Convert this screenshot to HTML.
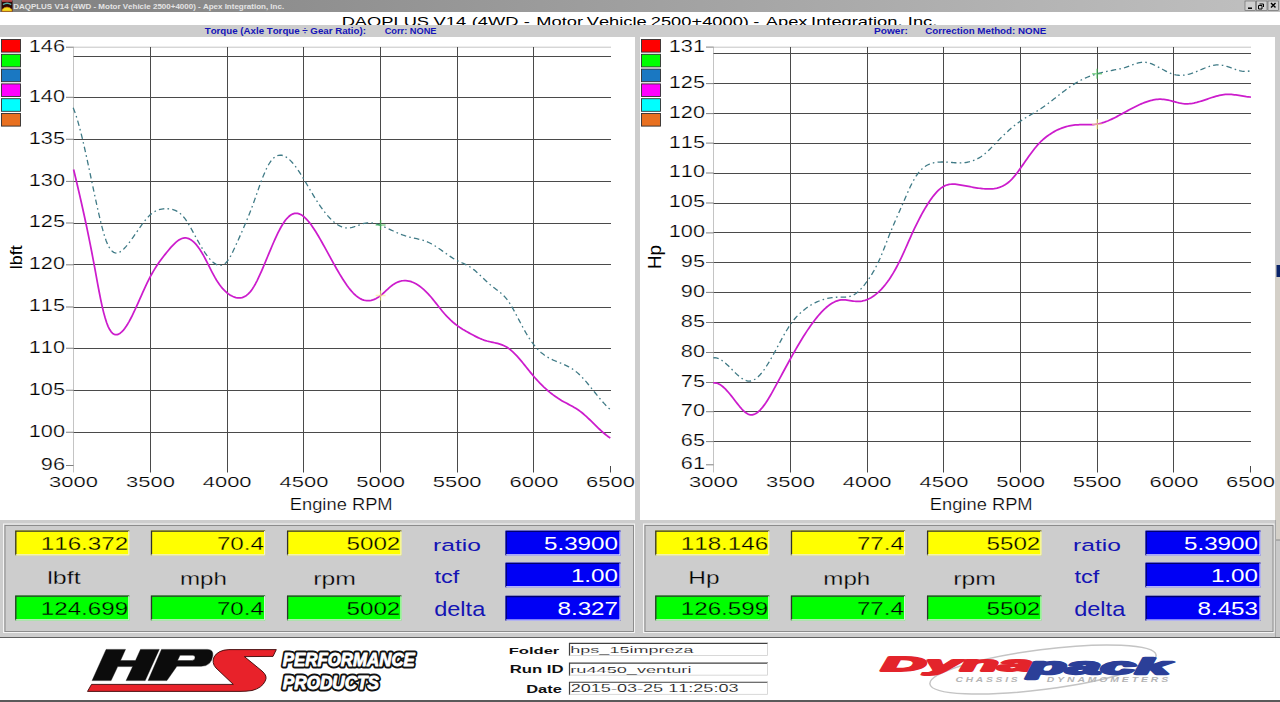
<!DOCTYPE html>
<html><head><meta charset="utf-8"><style>html,body{margin:0;padding:0;width:1280px;height:702px;overflow:hidden;background:#fff}</style></head><body>
<svg width="1280" height="702" viewBox="0 0 1280 702" style="position:absolute;left:0;top:0;font-kerning:none">
<rect x="0" y="0" width="1280" height="702" fill="#ffffff" />
<defs><linearGradient id="tbg" x1="0" y1="0" x2="1" y2="0"><stop offset="0" stop-color="#808080"/><stop offset="1" stop-color="#c0c0c0"/></linearGradient></defs>
<rect x="0" y="0" width="1280" height="12" fill="url(#tbg)" />
<g>
<rect x="1.5" y="0.5" width="11" height="11" fill="#2a0606" />
<rect x="2" y="0.3" width="10" height="1.4" fill="#d85050" />
<path d="M3,4.6 Q7.2,1.8 11.2,4.6" fill="none" stroke="#58a8a0" stroke-width="1.5"/>
<path d="M2,11.3 L2,9.5 Q7,4.6 12,9.5 L12,11.3 Z" fill="#f4dc20" stroke="#c86a10" stroke-width="0.7"/>
</g>
<text transform="matrix(0.07992,0,0,0.06915,13.141,8.548)" font-family="Liberation Sans" font-size="100" font-weight="bold" font-style="normal" fill="#e4e4e4" xml:space="preserve" >DAQPLUS V14 (4WD - Motor Vehicle 2500+4000) - Apex Integration, Inc.</text>
<rect x="1245" y="1" width="10.5" height="9.5" fill="#d0d0d0" stroke="#606060" stroke-width="0.6"/>
<rect x="1256.5" y="1" width="10.5" height="9.5" fill="#d0d0d0" stroke="#606060" stroke-width="0.6"/>
<rect x="1268" y="1" width="10.5" height="9.5" fill="#d0d0d0" stroke="#606060" stroke-width="0.6"/>
<path d="M1248,8.2 h4" stroke="#000" stroke-width="1.5"/>
<path d="M1259.5,4 h4 v3 M1258.5,5.5 h3.5 v3.5 h-3.5 z" fill="none" stroke="#000" stroke-width="1"/>
<path d="M1271,3 l4.5,4.5 M1275.5,3 l-4.5,4.5" stroke="#000" stroke-width="1.4"/>
<defs><clipPath id="ttl"><rect x="0" y="12" width="1280" height="13"/></clipPath></defs>
<g clip-path="url(#ttl)">
<text transform="matrix(0.18300,0,0,0.13600,341.636,25.500)" font-family="Liberation Sans" font-size="100" font-weight="normal" font-style="normal" fill="#000" text-anchor="start" xml:space="preserve" >DAQPLUS</text>
<text transform="matrix(0.18300,0,0,0.13600,433.567,25.500)" font-family="Liberation Sans" font-size="100" font-weight="normal" font-style="normal" fill="#000" text-anchor="start" xml:space="preserve" >V14</text>
<text transform="matrix(0.18300,0,0,0.13600,471.702,25.500)" font-family="Liberation Sans" font-size="100" font-weight="normal" font-style="normal" fill="#000" text-anchor="start" xml:space="preserve" >(4WD</text>
<text transform="matrix(0.18300,0,0,0.13600,523.668,25.500)" font-family="Liberation Sans" font-size="100" font-weight="normal" font-style="normal" fill="#000" text-anchor="start" xml:space="preserve" >-</text>
<text transform="matrix(0.18300,0,0,0.13600,536.236,25.500)" font-family="Liberation Sans" font-size="100" font-weight="normal" font-style="normal" fill="#000" text-anchor="start" xml:space="preserve" >Motor</text>
<text transform="matrix(0.18300,0,0,0.13600,586.717,25.500)" font-family="Liberation Sans" font-size="100" font-weight="normal" font-style="normal" fill="#000" text-anchor="start" xml:space="preserve" >Vehicle</text>
<text transform="matrix(0.18300,0,0,0.13600,650.785,25.500)" font-family="Liberation Sans" font-size="100" font-weight="normal" font-style="normal" fill="#000" text-anchor="start" xml:space="preserve" >2500+4000)</text>
<text transform="matrix(0.18300,0,0,0.13600,753.268,25.500)" font-family="Liberation Sans" font-size="100" font-weight="normal" font-style="normal" fill="#000" text-anchor="start" xml:space="preserve" >-</text>
<text transform="matrix(0.18300,0,0,0.13600,765.800,25.500)" font-family="Liberation Sans" font-size="100" font-weight="normal" font-style="normal" fill="#000" text-anchor="start" xml:space="preserve" >Apex</text>
<text transform="matrix(0.18300,0,0,0.13600,811.053,25.500)" font-family="Liberation Sans" font-size="100" font-weight="normal" font-style="normal" fill="#000" text-anchor="start" xml:space="preserve" >Integration,</text>
<text transform="matrix(0.18300,0,0,0.13600,907.853,25.500)" font-family="Liberation Sans" font-size="100" font-weight="normal" font-style="normal" fill="#000" text-anchor="start" xml:space="preserve" >Inc.</text>
</g>
<rect x="0" y="25" width="1280" height="12" fill="#cdcdcd" />
<text transform="matrix(0.09721,0,0,0.08511,204.703,34.213)" font-family="Liberation Sans" font-size="100" font-weight="bold" font-style="normal" fill="#1414b8" xml:space="preserve" >Torque (Axle Torque ÷ Gear Ratio):</text>
<text transform="matrix(0.09268,0,0,0.08803,384.629,34.162)" font-family="Liberation Sans" font-size="100" font-weight="bold" font-style="normal" fill="#1414b8" xml:space="preserve" >Corr: NONE</text>
<text transform="matrix(0.10126,0,0,0.08929,874.091,34.161)" font-family="Liberation Sans" font-size="100" font-weight="bold" font-style="normal" fill="#1414b8" xml:space="preserve" >Power:</text>
<text transform="matrix(0.09781,0,0,0.08446,925.209,34.166)" font-family="Liberation Sans" font-size="100" font-weight="bold" font-style="normal" fill="#1414b8" xml:space="preserve" >Correction Method: NONE</text>
<rect x="635" y="37" width="5" height="483" fill="#cdcdcd" />
<rect x="1275" y="37" width="5" height="228" fill="#cdcdcd" />
<rect x="1275" y="265" width="5" height="275" fill="#d4d0c8" />
<rect x="1276.5" y="265" width="3.5" height="12" fill="#0a246a" />
<rect x="1.5" y="39.5" width="19" height="12.6" fill="#ff0000" stroke="#303030" stroke-width="0.9"/>
<rect x="1.5" y="54.3" width="19" height="12.6" fill="#00ff00" stroke="#303030" stroke-width="0.9"/>
<rect x="1.5" y="69.1" width="19" height="12.6" fill="#1a78c2" stroke="#303030" stroke-width="0.9"/>
<rect x="1.5" y="83.9" width="19" height="12.6" fill="#ff00ff" stroke="#303030" stroke-width="0.9"/>
<rect x="1.5" y="98.7" width="19" height="12.6" fill="#00ffff" stroke="#303030" stroke-width="0.9"/>
<rect x="1.5" y="113.5" width="19" height="12.6" fill="#e87020" stroke="#303030" stroke-width="0.9"/>
<line x1="73" y1="47.2" x2="611" y2="47.2" stroke="#c4c4c4" stroke-width="1" />
<line x1="73.5" y1="47" x2="73.5" y2="472.5" stroke="#c4c4c4" stroke-width="1" />
<line x1="73.5" y1="56.5" x2="611" y2="56.5" stroke="#4a4a4a" stroke-width="1.0" />
<line x1="73.5" y1="97.5" x2="611" y2="97.5" stroke="#4a4a4a" stroke-width="1.0" />
<line x1="73.5" y1="139.5" x2="611" y2="139.5" stroke="#4a4a4a" stroke-width="1.0" />
<line x1="73.5" y1="181.5" x2="611" y2="181.5" stroke="#4a4a4a" stroke-width="1.0" />
<line x1="73.5" y1="223.5" x2="611" y2="223.5" stroke="#4a4a4a" stroke-width="1.0" />
<line x1="73.5" y1="264.5" x2="611" y2="264.5" stroke="#4a4a4a" stroke-width="1.0" />
<line x1="73.5" y1="307.5" x2="611" y2="307.5" stroke="#4a4a4a" stroke-width="1.0" />
<line x1="73.5" y1="348.5" x2="611" y2="348.5" stroke="#4a4a4a" stroke-width="1.0" />
<line x1="73.5" y1="390.5" x2="611" y2="390.5" stroke="#4a4a4a" stroke-width="1.0" />
<line x1="73.5" y1="432.5" x2="611" y2="432.5" stroke="#4a4a4a" stroke-width="1.0" />
<line x1="150.5" y1="47" x2="150.5" y2="472.5" stroke="#4a4a4a" stroke-width="1.0" />
<line x1="227.5" y1="47" x2="227.5" y2="472.5" stroke="#4a4a4a" stroke-width="1.0" />
<line x1="303.5" y1="47" x2="303.5" y2="472.5" stroke="#4a4a4a" stroke-width="1.0" />
<line x1="380.5" y1="47" x2="380.5" y2="472.5" stroke="#4a4a4a" stroke-width="1.0" />
<line x1="457.5" y1="47" x2="457.5" y2="472.5" stroke="#4a4a4a" stroke-width="1.0" />
<line x1="533.5" y1="47" x2="533.5" y2="472.5" stroke="#4a4a4a" stroke-width="1.0" />
<line x1="610.5" y1="466" x2="610.5" y2="472.5" stroke="#4a4a4a" stroke-width="1.0" />
<line x1="66" y1="47.2" x2="73.5" y2="47.2" stroke="#808080" stroke-width="1" />
<line x1="66" y1="97.3" x2="73.5" y2="97.3" stroke="#808080" stroke-width="1" />
<line x1="66" y1="139.25" x2="73.5" y2="139.25" stroke="#808080" stroke-width="1" />
<line x1="66" y1="181.4" x2="73.5" y2="181.4" stroke="#808080" stroke-width="1" />
<line x1="66" y1="223.0" x2="73.5" y2="223.0" stroke="#808080" stroke-width="1" />
<line x1="66" y1="264.8" x2="73.5" y2="264.8" stroke="#808080" stroke-width="1" />
<line x1="66" y1="307.0" x2="73.5" y2="307.0" stroke="#808080" stroke-width="1" />
<line x1="66" y1="348.25" x2="73.5" y2="348.25" stroke="#808080" stroke-width="1" />
<line x1="66" y1="390.25" x2="73.5" y2="390.25" stroke="#808080" stroke-width="1" />
<line x1="66" y1="432.25" x2="73.5" y2="432.25" stroke="#808080" stroke-width="1" />
<line x1="66" y1="465.5" x2="73.5" y2="465.5" stroke="#808080" stroke-width="1" />
<text transform="matrix(0.21742,0,0,0.15634,65.039,51.600)" font-family="Liberation Sans" font-size="100" font-weight="normal" font-style="normal" fill="#000" text-anchor="end" xml:space="preserve"  stroke="#ffffff" stroke-width="1.5">146</text>
<text transform="matrix(0.21742,0,0,0.15634,65.039,101.700)" font-family="Liberation Sans" font-size="100" font-weight="normal" font-style="normal" fill="#000" text-anchor="end" xml:space="preserve"  stroke="#ffffff" stroke-width="1.5">140</text>
<text transform="matrix(0.21742,0,0,0.15634,65.039,143.650)" font-family="Liberation Sans" font-size="100" font-weight="normal" font-style="normal" fill="#000" text-anchor="end" xml:space="preserve"  stroke="#ffffff" stroke-width="1.5">135</text>
<text transform="matrix(0.21742,0,0,0.15634,65.039,185.800)" font-family="Liberation Sans" font-size="100" font-weight="normal" font-style="normal" fill="#000" text-anchor="end" xml:space="preserve"  stroke="#ffffff" stroke-width="1.5">130</text>
<text transform="matrix(0.21742,0,0,0.15634,65.039,227.400)" font-family="Liberation Sans" font-size="100" font-weight="normal" font-style="normal" fill="#000" text-anchor="end" xml:space="preserve"  stroke="#ffffff" stroke-width="1.5">125</text>
<text transform="matrix(0.21742,0,0,0.15634,65.039,269.200)" font-family="Liberation Sans" font-size="100" font-weight="normal" font-style="normal" fill="#000" text-anchor="end" xml:space="preserve"  stroke="#ffffff" stroke-width="1.5">120</text>
<text transform="matrix(0.21742,0,0,0.15634,65.039,311.400)" font-family="Liberation Sans" font-size="100" font-weight="normal" font-style="normal" fill="#000" text-anchor="end" xml:space="preserve"  stroke="#ffffff" stroke-width="1.5">115</text>
<text transform="matrix(0.21742,0,0,0.15634,65.039,352.650)" font-family="Liberation Sans" font-size="100" font-weight="normal" font-style="normal" fill="#000" text-anchor="end" xml:space="preserve"  stroke="#ffffff" stroke-width="1.5">110</text>
<text transform="matrix(0.21742,0,0,0.15634,65.039,394.650)" font-family="Liberation Sans" font-size="100" font-weight="normal" font-style="normal" fill="#000" text-anchor="end" xml:space="preserve"  stroke="#ffffff" stroke-width="1.5">105</text>
<text transform="matrix(0.21742,0,0,0.15634,65.039,436.650)" font-family="Liberation Sans" font-size="100" font-weight="normal" font-style="normal" fill="#000" text-anchor="end" xml:space="preserve"  stroke="#ffffff" stroke-width="1.5">100</text>
<text transform="matrix(0.21742,0,0,0.15634,65.039,469.900)" font-family="Liberation Sans" font-size="100" font-weight="normal" font-style="normal" fill="#000" text-anchor="end" xml:space="preserve"  stroke="#ffffff" stroke-width="1.5">96</text>
<text transform="matrix(0.21963,0,0,0.15493,73.551,486.595)" font-family="Liberation Sans" font-size="100" font-weight="normal" font-style="normal" fill="#000" text-anchor="middle" xml:space="preserve"  stroke="#ffffff" stroke-width="1.5">3000</text>
<text transform="matrix(0.21963,0,0,0.15493,150.551,486.595)" font-family="Liberation Sans" font-size="100" font-weight="normal" font-style="normal" fill="#000" text-anchor="middle" xml:space="preserve"  stroke="#ffffff" stroke-width="1.5">3500</text>
<text transform="matrix(0.21963,0,0,0.15493,227.151,486.595)" font-family="Liberation Sans" font-size="100" font-weight="normal" font-style="normal" fill="#000" text-anchor="middle" xml:space="preserve"  stroke="#ffffff" stroke-width="1.5">4000</text>
<text transform="matrix(0.21963,0,0,0.15493,303.951,486.595)" font-family="Liberation Sans" font-size="100" font-weight="normal" font-style="normal" fill="#000" text-anchor="middle" xml:space="preserve"  stroke="#ffffff" stroke-width="1.5">4500</text>
<text transform="matrix(0.21963,0,0,0.15493,380.651,486.595)" font-family="Liberation Sans" font-size="100" font-weight="normal" font-style="normal" fill="#000" text-anchor="middle" xml:space="preserve"  stroke="#ffffff" stroke-width="1.5">5000</text>
<text transform="matrix(0.21963,0,0,0.15493,457.151,486.595)" font-family="Liberation Sans" font-size="100" font-weight="normal" font-style="normal" fill="#000" text-anchor="middle" xml:space="preserve"  stroke="#ffffff" stroke-width="1.5">5500</text>
<text transform="matrix(0.21963,0,0,0.15493,533.951,486.595)" font-family="Liberation Sans" font-size="100" font-weight="normal" font-style="normal" fill="#000" text-anchor="middle" xml:space="preserve"  stroke="#ffffff" stroke-width="1.5">6000</text>
<text transform="matrix(0.21963,0,0,0.15493,610.551,486.595)" font-family="Liberation Sans" font-size="100" font-weight="normal" font-style="normal" fill="#000" text-anchor="middle" xml:space="preserve"  stroke="#ffffff" stroke-width="1.5">6500</text>
<text transform="matrix(0.18321,0,0,0.16117,289.784,510.015)" font-family="Liberation Sans" font-size="100" font-weight="normal" font-style="normal" fill="#000" xml:space="preserve"  stroke="#ffffff" stroke-width="1.5">Engine RPM</text>
<text transform="matrix(0,-0.17937,0.17297,0,21.627,269.256)" font-family="Liberation Sans" font-size="100" fill="#000">lbft</text>
<path d="M73.20,107.82 L74.70,111.64 L76.20,116.01 L77.70,120.87 L79.20,126.18 L80.70,131.87 L82.20,137.92 L83.70,144.26 L85.20,150.85 L86.70,157.65 L88.20,164.59 L89.70,171.64 L91.20,178.74 L92.70,185.84 L94.20,192.91 L95.70,199.88 L97.20,206.70 L98.70,213.34 L100.21,219.75 L101.71,225.85 L103.21,231.54 L104.71,236.61 L106.21,240.93 L107.71,244.51 L109.21,247.39 L110.71,249.63 L112.21,251.27 L113.71,252.36 L115.21,252.94 L116.71,253.07 L118.21,252.79 L119.71,252.14 L121.21,251.18 L122.71,249.95 L124.21,248.50 L125.71,246.88 L127.21,245.12 L128.71,243.24 L130.21,241.26 L131.71,239.20 L133.21,237.08 L134.71,234.92 L136.21,232.74 L137.71,230.55 L139.21,228.39 L140.71,226.26 L142.21,224.18 L143.71,222.18 L145.21,220.28 L146.71,218.49 L148.21,216.84 L149.71,215.33 L151.21,214.00 L152.71,212.85 L154.22,211.86 L155.72,211.03 L157.22,210.35 L158.72,209.80 L160.22,209.37 L161.72,209.06 L163.22,208.85 L164.72,208.74 L166.22,208.71 L167.72,208.75 L169.22,208.86 L170.72,209.07 L172.22,209.38 L173.72,209.82 L175.22,210.40 L176.72,211.13 L178.22,212.04 L179.72,213.14 L181.22,214.44 L182.72,215.96 L184.22,217.72 L185.72,219.73 L187.22,221.96 L188.72,224.39 L190.22,226.96 L191.72,229.64 L193.22,232.39 L194.72,235.16 L196.22,237.91 L197.72,240.62 L199.22,243.28 L200.72,245.86 L202.22,248.36 L203.72,250.75 L205.22,253.02 L206.72,255.15 L208.23,257.12 L209.73,258.92 L211.23,260.54 L212.73,261.95 L214.23,263.13 L215.73,264.08 L217.23,264.78 L218.73,265.20 L220.23,265.34 L221.73,265.17 L223.23,264.66 L224.73,263.78 L226.23,262.48 L227.73,260.71 L229.23,258.48 L230.73,255.87 L232.23,252.95 L233.73,249.82 L235.23,246.56 L236.73,243.26 L238.23,239.95 L239.73,236.61 L241.23,233.24 L242.73,229.82 L244.23,226.34 L245.73,222.80 L247.23,219.18 L248.73,215.48 L250.23,211.68 L251.73,207.78 L253.23,203.76 L254.73,199.62 L256.23,195.37 L257.73,191.08 L259.23,186.82 L260.73,182.65 L262.24,178.65 L263.74,174.88 L265.24,171.37 L266.74,168.15 L268.24,165.28 L269.74,162.77 L271.24,160.65 L272.74,158.90 L274.24,157.50 L275.74,156.44 L277.24,155.70 L278.74,155.27 L280.24,155.12 L281.74,155.25 L283.24,155.63 L284.74,156.25 L286.24,157.10 L287.74,158.17 L289.24,159.44 L290.74,160.89 L292.24,162.51 L293.74,164.29 L295.24,166.21 L296.74,168.26 L298.24,170.42 L299.74,172.68 L301.24,175.02 L302.74,177.44 L304.24,179.91 L305.74,182.42 L307.24,184.96 L308.74,187.52 L310.24,190.07 L311.74,192.61 L313.24,195.11 L314.74,197.57 L316.25,199.97 L317.75,202.31 L319.25,204.57 L320.75,206.76 L322.25,208.86 L323.75,210.89 L325.25,212.82 L326.75,214.65 L328.25,216.39 L329.75,218.02 L331.25,219.55 L332.75,220.97 L334.25,222.27 L335.75,223.45 L337.25,224.50 L338.75,225.43 L340.25,226.22 L341.75,226.87 L343.25,227.38 L344.75,227.75 L346.25,227.96 L347.75,228.01 L349.25,227.92 L350.75,227.69 L352.25,227.35 L353.75,226.92 L355.25,226.43 L356.75,225.89 L358.25,225.33 L359.75,224.78 L361.25,224.25 L362.75,223.76 L364.25,223.35 L365.75,223.03 L367.25,222.83 L368.76,222.75 L370.26,222.78 L371.76,222.92 L373.26,223.16 L374.76,223.49 L376.26,223.88 L377.76,224.35 L379.26,224.87 L380.76,225.43 L382.26,226.03 L383.76,226.66 L385.26,227.31 L386.76,227.98 L388.26,228.67 L389.76,229.37 L391.26,230.07 L392.76,230.77 L394.26,231.47 L395.76,232.15 L397.26,232.82 L398.76,233.46 L400.26,234.08 L401.76,234.67 L403.26,235.22 L404.76,235.73 L406.26,236.20 L407.76,236.62 L409.26,237.01 L410.76,237.37 L412.26,237.71 L413.76,238.04 L415.26,238.37 L416.76,238.70 L418.26,239.05 L419.76,239.41 L421.26,239.81 L422.77,240.24 L424.27,240.72 L425.77,241.24 L427.27,241.83 L428.77,242.49 L430.27,243.22 L431.77,244.02 L433.27,244.88 L434.77,245.79 L436.27,246.75 L437.77,247.75 L439.27,248.77 L440.77,249.82 L442.27,250.88 L443.77,251.95 L445.27,253.02 L446.77,254.08 L448.27,255.13 L449.77,256.15 L451.27,257.14 L452.77,258.10 L454.27,259.01 L455.77,259.86 L457.27,260.65 L458.77,261.39 L460.27,262.07 L461.77,262.74 L463.27,263.40 L464.77,264.08 L466.27,264.80 L467.77,265.58 L469.27,266.44 L470.77,267.40 L472.27,268.47 L473.77,269.63 L475.27,270.87 L476.78,272.18 L478.28,273.54 L479.78,274.94 L481.28,276.37 L482.78,277.81 L484.28,279.25 L485.78,280.67 L487.28,282.07 L488.78,283.43 L490.28,284.73 L491.78,285.97 L493.28,287.14 L494.78,288.28 L496.28,289.40 L497.78,290.53 L499.28,291.71 L500.78,292.95 L502.28,294.29 L503.78,295.75 L505.28,297.36 L506.78,299.15 L508.28,301.15 L509.78,303.36 L511.28,305.78 L512.78,308.36 L514.28,311.08 L515.78,313.89 L517.28,316.76 L518.78,319.67 L520.28,322.56 L521.78,325.42 L523.28,328.19 L524.78,330.88 L526.28,333.46 L527.78,335.93 L529.28,338.29 L530.79,340.54 L532.29,342.66 L533.79,344.66 L535.29,346.52 L536.79,348.25 L538.29,349.84 L539.79,351.30 L541.29,352.64 L542.79,353.86 L544.29,354.98 L545.79,356.01 L547.29,356.95 L548.79,357.81 L550.29,358.62 L551.79,359.36 L553.29,360.06 L554.79,360.72 L556.29,361.35 L557.79,361.97 L559.29,362.58 L560.79,363.18 L562.29,363.80 L563.79,364.44 L565.29,365.10 L566.79,365.81 L568.29,366.56 L569.79,367.37 L571.29,368.25 L572.79,369.20 L574.29,370.24 L575.79,371.38 L577.29,372.62 L578.79,373.96 L580.29,375.40 L581.79,376.93 L583.29,378.54 L584.80,380.21 L586.30,381.94 L587.80,383.72 L589.30,385.54 L590.80,387.38 L592.30,389.25 L593.80,391.12 L595.30,392.99 L596.80,394.85 L598.30,396.69 L599.80,398.50 L601.30,400.27 L602.80,401.99 L604.30,403.65 L605.80,405.23 L607.30,406.74 L608.80,408.16 L610.30,409.48" fill="none" stroke="#3f7a86" stroke-width="1.3" stroke-dasharray="5.5,3.2,1.6,3.2"/>
<path d="M73.60,169.45 L75.10,175.70 L76.61,182.02 L78.11,188.43 L79.61,194.92 L81.12,201.51 L82.62,208.22 L84.12,215.05 L85.63,222.02 L87.13,229.15 L88.63,236.43 L90.14,243.88 L91.64,251.52 L93.14,259.35 L94.65,267.39 L96.15,275.60 L97.65,283.79 L99.16,291.78 L100.66,299.37 L102.16,306.36 L103.67,312.61 L105.17,318.06 L106.67,322.72 L108.18,326.57 L109.68,329.59 L111.18,331.84 L112.69,333.40 L114.19,334.32 L115.69,334.69 L117.20,334.58 L118.70,334.05 L120.20,333.15 L121.71,331.90 L123.21,330.33 L124.71,328.45 L126.22,326.31 L127.72,323.92 L129.22,321.32 L130.73,318.52 L132.23,315.56 L133.73,312.46 L135.24,309.25 L136.74,305.95 L138.24,302.59 L139.75,299.20 L141.25,295.80 L142.75,292.42 L144.26,289.08 L145.76,285.82 L147.26,282.65 L148.77,279.61 L150.27,276.72 L151.77,273.97 L153.28,271.37 L154.78,268.88 L156.28,266.52 L157.79,264.26 L159.29,262.09 L160.79,260.00 L162.30,257.99 L163.80,256.04 L165.31,254.14 L166.81,252.27 L168.31,250.44 L169.82,248.66 L171.32,246.94 L172.82,245.31 L174.33,243.79 L175.83,242.40 L177.33,241.15 L178.84,240.08 L180.34,239.20 L181.84,238.53 L183.35,238.09 L184.85,237.90 L186.35,237.98 L187.86,238.32 L189.36,238.91 L190.86,239.76 L192.37,240.84 L193.87,242.15 L195.37,243.69 L196.88,245.44 L198.38,247.40 L199.88,249.56 L201.39,251.91 L202.89,254.45 L204.39,257.16 L205.90,259.99 L207.40,262.91 L208.90,265.88 L210.41,268.86 L211.91,271.80 L213.41,274.66 L214.92,277.40 L216.42,279.98 L217.92,282.36 L219.43,284.53 L220.93,286.52 L222.43,288.32 L223.94,289.94 L225.44,291.41 L226.94,292.72 L228.45,293.89 L229.95,294.93 L231.45,295.82 L232.96,296.55 L234.46,297.14 L235.96,297.57 L237.47,297.83 L238.97,297.93 L240.47,297.84 L241.98,297.57 L243.48,297.08 L244.98,296.37 L246.49,295.41 L247.99,294.19 L249.49,292.69 L251.00,290.89 L252.50,288.78 L254.00,286.38 L255.51,283.72 L257.01,280.83 L258.51,277.74 L260.02,274.48 L261.52,271.09 L263.02,267.59 L264.53,264.02 L266.03,260.41 L267.53,256.77 L269.04,253.15 L270.54,249.54 L272.04,245.99 L273.55,242.51 L275.05,239.13 L276.55,235.86 L278.06,232.74 L279.56,229.78 L281.06,227.01 L282.57,224.45 L284.07,222.13 L285.57,220.06 L287.08,218.27 L288.58,216.75 L290.08,215.51 L291.59,214.55 L293.09,213.87 L294.59,213.46 L296.10,213.31 L297.60,213.44 L299.10,213.84 L300.61,214.48 L302.11,215.37 L303.61,216.47 L305.12,217.79 L306.62,219.30 L308.12,220.98 L309.63,222.83 L311.13,224.83 L312.63,226.96 L314.14,229.22 L315.64,231.58 L317.14,234.03 L318.65,236.56 L320.15,239.15 L321.65,241.79 L323.16,244.47 L324.66,247.18 L326.16,249.91 L327.67,252.66 L329.17,255.41 L330.67,258.16 L332.18,260.90 L333.68,263.61 L335.18,266.30 L336.69,268.95 L338.19,271.55 L339.69,274.09 L341.20,276.57 L342.70,278.98 L344.21,281.30 L345.71,283.53 L347.21,285.66 L348.72,287.69 L350.22,289.59 L351.72,291.37 L353.23,293.02 L354.73,294.52 L356.23,295.87 L357.74,297.05 L359.24,298.07 L360.74,298.92 L362.25,299.60 L363.75,300.11 L365.25,300.47 L366.76,300.66 L368.26,300.70 L369.76,300.59 L371.27,300.33 L372.77,299.92 L374.27,299.37 L375.78,298.68 L377.28,297.85 L378.78,296.89 L380.29,295.79 L381.79,294.58 L383.29,293.26 L384.80,291.87 L386.30,290.46 L387.80,289.05 L389.31,287.68 L390.81,286.38 L392.31,285.19 L393.82,284.14 L395.32,283.24 L396.82,282.47 L398.33,281.84 L399.83,281.35 L401.33,280.98 L402.84,280.75 L404.34,280.65 L405.84,280.67 L407.35,280.81 L408.85,281.07 L410.35,281.44 L411.86,281.94 L413.36,282.54 L414.86,283.25 L416.37,284.07 L417.87,284.99 L419.37,286.01 L420.88,287.13 L422.38,288.35 L423.88,289.66 L425.39,291.06 L426.89,292.55 L428.39,294.13 L429.90,295.79 L431.40,297.52 L432.90,299.33 L434.41,301.20 L435.91,303.10 L437.41,305.01 L438.92,306.93 L440.42,308.83 L441.92,310.69 L443.43,312.49 L444.93,314.22 L446.43,315.88 L447.94,317.46 L449.44,318.96 L450.94,320.39 L452.45,321.75 L453.95,323.04 L455.45,324.26 L456.96,325.41 L458.46,326.50 L459.96,327.52 L461.47,328.49 L462.97,329.43 L464.47,330.32 L465.98,331.19 L467.48,332.04 L468.98,332.88 L470.49,333.71 L471.99,334.53 L473.49,335.33 L475.00,336.11 L476.50,336.87 L478.00,337.59 L479.51,338.28 L481.01,338.93 L482.51,339.53 L484.02,340.09 L485.52,340.58 L487.02,341.02 L488.53,341.41 L490.03,341.76 L491.53,342.09 L493.04,342.42 L494.54,342.74 L496.04,343.09 L497.55,343.46 L499.05,343.88 L500.55,344.35 L502.06,344.89 L503.56,345.51 L505.06,346.23 L506.57,347.06 L508.07,348.01 L509.57,349.09 L511.08,350.29 L512.58,351.62 L514.08,353.05 L515.59,354.58 L517.09,356.19 L518.59,357.87 L520.10,359.62 L521.60,361.41 L523.11,363.24 L524.61,365.11 L526.11,366.98 L527.62,368.86 L529.12,370.74 L530.62,372.60 L532.13,374.43 L533.63,376.22 L535.13,377.96 L536.64,379.65 L538.14,381.28 L539.64,382.87 L541.15,384.40 L542.65,385.88 L544.15,387.32 L545.66,388.70 L547.16,390.04 L548.66,391.32 L550.17,392.56 L551.67,393.76 L553.17,394.91 L554.68,396.01 L556.18,397.07 L557.68,398.09 L559.19,399.06 L560.69,399.99 L562.19,400.88 L563.70,401.74 L565.20,402.55 L566.70,403.35 L568.21,404.14 L569.71,404.93 L571.21,405.72 L572.72,406.54 L574.22,407.40 L575.72,408.29 L577.23,409.25 L578.73,410.26 L580.23,411.35 L581.74,412.53 L583.24,413.77 L584.74,415.07 L586.25,416.42 L587.75,417.82 L589.25,419.25 L590.76,420.71 L592.26,422.18 L593.76,423.66 L595.27,425.14 L596.77,426.62 L598.27,428.07 L599.78,429.50 L601.28,430.89 L602.78,432.24 L604.29,433.53 L605.79,434.77 L607.29,435.93 L608.80,437.01 L610.30,438.00" fill="none" stroke="#cc1ccc" stroke-width="1.75" stroke-linejoin="round"/>
<path d="M375.6,225 h10 M380.6,220 v10" stroke="#40c050" stroke-width="1.6" opacity="0.6"/>
<path d="M375.6,295.5 h10 M380.6,290.5 v10" stroke="#f8f080" stroke-width="1.6" opacity="0.6"/>
<rect x="641.5" y="39.5" width="19" height="12.6" fill="#ff0000" stroke="#303030" stroke-width="0.9"/>
<rect x="641.5" y="54.3" width="19" height="12.6" fill="#00ff00" stroke="#303030" stroke-width="0.9"/>
<rect x="641.5" y="69.1" width="19" height="12.6" fill="#1a78c2" stroke="#303030" stroke-width="0.9"/>
<rect x="641.5" y="83.9" width="19" height="12.6" fill="#ff00ff" stroke="#303030" stroke-width="0.9"/>
<rect x="641.5" y="98.7" width="19" height="12.6" fill="#00ffff" stroke="#303030" stroke-width="0.9"/>
<rect x="641.5" y="113.5" width="19" height="12.6" fill="#e87020" stroke="#303030" stroke-width="0.9"/>
<line x1="713" y1="47.2" x2="1251" y2="47.2" stroke="#c4c4c4" stroke-width="1" />
<line x1="713.5" y1="47" x2="713.5" y2="472.5" stroke="#c4c4c4" stroke-width="1" />
<line x1="713.5" y1="53.5" x2="1251" y2="53.5" stroke="#4a4a4a" stroke-width="1.0" />
<line x1="713.5" y1="83.5" x2="1251" y2="83.5" stroke="#4a4a4a" stroke-width="1.0" />
<line x1="713.5" y1="113.5" x2="1251" y2="113.5" stroke="#4a4a4a" stroke-width="1.0" />
<line x1="713.5" y1="143.5" x2="1251" y2="143.5" stroke="#4a4a4a" stroke-width="1.0" />
<line x1="713.5" y1="173.5" x2="1251" y2="173.5" stroke="#4a4a4a" stroke-width="1.0" />
<line x1="713.5" y1="203.5" x2="1251" y2="203.5" stroke="#4a4a4a" stroke-width="1.0" />
<line x1="713.5" y1="232.5" x2="1251" y2="232.5" stroke="#4a4a4a" stroke-width="1.0" />
<line x1="713.5" y1="262.5" x2="1251" y2="262.5" stroke="#4a4a4a" stroke-width="1.0" />
<line x1="713.5" y1="292.5" x2="1251" y2="292.5" stroke="#4a4a4a" stroke-width="1.0" />
<line x1="713.5" y1="322.5" x2="1251" y2="322.5" stroke="#4a4a4a" stroke-width="1.0" />
<line x1="713.5" y1="352.5" x2="1251" y2="352.5" stroke="#4a4a4a" stroke-width="1.0" />
<line x1="713.5" y1="382.5" x2="1251" y2="382.5" stroke="#4a4a4a" stroke-width="1.0" />
<line x1="713.5" y1="411.5" x2="1251" y2="411.5" stroke="#4a4a4a" stroke-width="1.0" />
<line x1="713.5" y1="441.5" x2="1251" y2="441.5" stroke="#4a4a4a" stroke-width="1.0" />
<line x1="790.5" y1="47" x2="790.5" y2="472.5" stroke="#4a4a4a" stroke-width="1.0" />
<line x1="867.5" y1="47" x2="867.5" y2="472.5" stroke="#4a4a4a" stroke-width="1.0" />
<line x1="943.5" y1="47" x2="943.5" y2="472.5" stroke="#4a4a4a" stroke-width="1.0" />
<line x1="1020.5" y1="47" x2="1020.5" y2="472.5" stroke="#4a4a4a" stroke-width="1.0" />
<line x1="1097.5" y1="47" x2="1097.5" y2="472.5" stroke="#4a4a4a" stroke-width="1.0" />
<line x1="1173.5" y1="47" x2="1173.5" y2="472.5" stroke="#4a4a4a" stroke-width="1.0" />
<line x1="1250.5" y1="466" x2="1250.5" y2="472.5" stroke="#4a4a4a" stroke-width="1.0" />
<line x1="706" y1="47.1" x2="713.5" y2="47.1" stroke="#808080" stroke-width="1" />
<line x1="706" y1="83.6" x2="713.5" y2="83.6" stroke="#808080" stroke-width="1" />
<line x1="706" y1="113.6" x2="713.5" y2="113.6" stroke="#808080" stroke-width="1" />
<line x1="706" y1="143.1" x2="713.5" y2="143.1" stroke="#808080" stroke-width="1" />
<line x1="706" y1="173.0" x2="713.5" y2="173.0" stroke="#808080" stroke-width="1" />
<line x1="706" y1="203.0" x2="713.5" y2="203.0" stroke="#808080" stroke-width="1" />
<line x1="706" y1="232.9" x2="713.5" y2="232.9" stroke="#808080" stroke-width="1" />
<line x1="706" y1="262.5" x2="713.5" y2="262.5" stroke="#808080" stroke-width="1" />
<line x1="706" y1="292.4" x2="713.5" y2="292.4" stroke="#808080" stroke-width="1" />
<line x1="706" y1="322.5" x2="713.5" y2="322.5" stroke="#808080" stroke-width="1" />
<line x1="706" y1="352.5" x2="713.5" y2="352.5" stroke="#808080" stroke-width="1" />
<line x1="706" y1="382.5" x2="713.5" y2="382.5" stroke="#808080" stroke-width="1" />
<line x1="706" y1="411.7" x2="713.5" y2="411.7" stroke="#808080" stroke-width="1" />
<line x1="706" y1="441.6" x2="713.5" y2="441.6" stroke="#808080" stroke-width="1" />
<line x1="706" y1="464.8" x2="713.5" y2="464.8" stroke="#808080" stroke-width="1" />
<text transform="matrix(0.21742,0,0,0.15634,705.039,51.500)" font-family="Liberation Sans" font-size="100" font-weight="normal" font-style="normal" fill="#000" text-anchor="end" xml:space="preserve"  stroke="#ffffff" stroke-width="1.5">131</text>
<text transform="matrix(0.21742,0,0,0.15634,705.039,88.000)" font-family="Liberation Sans" font-size="100" font-weight="normal" font-style="normal" fill="#000" text-anchor="end" xml:space="preserve"  stroke="#ffffff" stroke-width="1.5">125</text>
<text transform="matrix(0.21742,0,0,0.15634,705.039,118.000)" font-family="Liberation Sans" font-size="100" font-weight="normal" font-style="normal" fill="#000" text-anchor="end" xml:space="preserve"  stroke="#ffffff" stroke-width="1.5">120</text>
<text transform="matrix(0.21742,0,0,0.15634,705.039,147.500)" font-family="Liberation Sans" font-size="100" font-weight="normal" font-style="normal" fill="#000" text-anchor="end" xml:space="preserve"  stroke="#ffffff" stroke-width="1.5">115</text>
<text transform="matrix(0.21742,0,0,0.15634,705.039,177.400)" font-family="Liberation Sans" font-size="100" font-weight="normal" font-style="normal" fill="#000" text-anchor="end" xml:space="preserve"  stroke="#ffffff" stroke-width="1.5">110</text>
<text transform="matrix(0.21742,0,0,0.15634,705.039,207.400)" font-family="Liberation Sans" font-size="100" font-weight="normal" font-style="normal" fill="#000" text-anchor="end" xml:space="preserve"  stroke="#ffffff" stroke-width="1.5">105</text>
<text transform="matrix(0.21742,0,0,0.15634,705.039,237.300)" font-family="Liberation Sans" font-size="100" font-weight="normal" font-style="normal" fill="#000" text-anchor="end" xml:space="preserve"  stroke="#ffffff" stroke-width="1.5">100</text>
<text transform="matrix(0.21742,0,0,0.15634,705.039,266.900)" font-family="Liberation Sans" font-size="100" font-weight="normal" font-style="normal" fill="#000" text-anchor="end" xml:space="preserve"  stroke="#ffffff" stroke-width="1.5">95</text>
<text transform="matrix(0.21742,0,0,0.15634,705.039,296.800)" font-family="Liberation Sans" font-size="100" font-weight="normal" font-style="normal" fill="#000" text-anchor="end" xml:space="preserve"  stroke="#ffffff" stroke-width="1.5">90</text>
<text transform="matrix(0.21742,0,0,0.15634,705.039,326.900)" font-family="Liberation Sans" font-size="100" font-weight="normal" font-style="normal" fill="#000" text-anchor="end" xml:space="preserve"  stroke="#ffffff" stroke-width="1.5">85</text>
<text transform="matrix(0.21742,0,0,0.15634,705.039,356.900)" font-family="Liberation Sans" font-size="100" font-weight="normal" font-style="normal" fill="#000" text-anchor="end" xml:space="preserve"  stroke="#ffffff" stroke-width="1.5">80</text>
<text transform="matrix(0.21742,0,0,0.15634,705.039,386.900)" font-family="Liberation Sans" font-size="100" font-weight="normal" font-style="normal" fill="#000" text-anchor="end" xml:space="preserve"  stroke="#ffffff" stroke-width="1.5">75</text>
<text transform="matrix(0.21742,0,0,0.15634,705.039,416.100)" font-family="Liberation Sans" font-size="100" font-weight="normal" font-style="normal" fill="#000" text-anchor="end" xml:space="preserve"  stroke="#ffffff" stroke-width="1.5">70</text>
<text transform="matrix(0.21742,0,0,0.15634,705.039,446.000)" font-family="Liberation Sans" font-size="100" font-weight="normal" font-style="normal" fill="#000" text-anchor="end" xml:space="preserve"  stroke="#ffffff" stroke-width="1.5">65</text>
<text transform="matrix(0.21742,0,0,0.15634,705.039,469.200)" font-family="Liberation Sans" font-size="100" font-weight="normal" font-style="normal" fill="#000" text-anchor="end" xml:space="preserve"  stroke="#ffffff" stroke-width="1.5">61</text>
<text transform="matrix(0.21963,0,0,0.15493,713.551,486.595)" font-family="Liberation Sans" font-size="100" font-weight="normal" font-style="normal" fill="#000" text-anchor="middle" xml:space="preserve"  stroke="#ffffff" stroke-width="1.5">3000</text>
<text transform="matrix(0.21963,0,0,0.15493,790.551,486.595)" font-family="Liberation Sans" font-size="100" font-weight="normal" font-style="normal" fill="#000" text-anchor="middle" xml:space="preserve"  stroke="#ffffff" stroke-width="1.5">3500</text>
<text transform="matrix(0.21963,0,0,0.15493,867.151,486.595)" font-family="Liberation Sans" font-size="100" font-weight="normal" font-style="normal" fill="#000" text-anchor="middle" xml:space="preserve"  stroke="#ffffff" stroke-width="1.5">4000</text>
<text transform="matrix(0.21963,0,0,0.15493,943.951,486.595)" font-family="Liberation Sans" font-size="100" font-weight="normal" font-style="normal" fill="#000" text-anchor="middle" xml:space="preserve"  stroke="#ffffff" stroke-width="1.5">4500</text>
<text transform="matrix(0.21963,0,0,0.15493,1020.651,486.595)" font-family="Liberation Sans" font-size="100" font-weight="normal" font-style="normal" fill="#000" text-anchor="middle" xml:space="preserve"  stroke="#ffffff" stroke-width="1.5">5000</text>
<text transform="matrix(0.21963,0,0,0.15493,1097.151,486.595)" font-family="Liberation Sans" font-size="100" font-weight="normal" font-style="normal" fill="#000" text-anchor="middle" xml:space="preserve"  stroke="#ffffff" stroke-width="1.5">5500</text>
<text transform="matrix(0.21963,0,0,0.15493,1173.951,486.595)" font-family="Liberation Sans" font-size="100" font-weight="normal" font-style="normal" fill="#000" text-anchor="middle" xml:space="preserve"  stroke="#ffffff" stroke-width="1.5">6000</text>
<text transform="matrix(0.21963,0,0,0.15493,1250.551,486.595)" font-family="Liberation Sans" font-size="100" font-weight="normal" font-style="normal" fill="#000" text-anchor="middle" xml:space="preserve"  stroke="#ffffff" stroke-width="1.5">6500</text>
<text transform="matrix(0.18321,0,0,0.16117,929.784,510.015)" font-family="Liberation Sans" font-size="100" font-weight="normal" font-style="normal" fill="#000" xml:space="preserve"  stroke="#ffffff" stroke-width="1.5">Engine RPM</text>
<text transform="matrix(0,-0.18793,0.17556,0,661.113,269.103)" font-family="Liberation Sans" font-size="100" fill="#000">Hp</text>
<path d="M713.30,357.78 L714.80,357.68 L716.30,357.85 L717.81,358.26 L719.31,358.88 L720.81,359.70 L722.31,360.68 L723.81,361.81 L725.31,363.06 L726.82,364.41 L728.32,365.84 L729.82,367.32 L731.32,368.84 L732.82,370.36 L734.32,371.87 L735.83,373.35 L737.33,374.76 L738.83,376.09 L740.33,377.32 L741.83,378.41 L743.33,379.36 L744.84,380.13 L746.34,380.70 L747.84,381.06 L749.34,381.17 L750.84,381.02 L752.34,380.60 L753.85,379.92 L755.35,379.01 L756.85,377.87 L758.35,376.52 L759.85,374.97 L761.35,373.24 L762.86,371.34 L764.36,369.29 L765.86,367.09 L767.36,364.77 L768.86,362.34 L770.36,359.80 L771.87,357.19 L773.37,354.50 L774.87,351.76 L776.37,348.97 L777.87,346.17 L779.37,343.36 L780.88,340.57 L782.38,337.82 L783.88,335.12 L785.38,332.50 L786.88,329.96 L788.38,327.54 L789.89,325.25 L791.39,323.11 L792.89,321.12 L794.39,319.26 L795.89,317.53 L797.39,315.91 L798.90,314.40 L800.40,312.98 L801.90,311.65 L803.40,310.38 L804.90,309.19 L806.40,308.06 L807.91,307.00 L809.41,306.00 L810.91,305.06 L812.41,304.18 L813.91,303.36 L815.41,302.60 L816.92,301.89 L818.42,301.24 L819.92,300.65 L821.42,300.10 L822.92,299.61 L824.42,299.17 L825.93,298.77 L827.43,298.42 L828.93,298.12 L830.43,297.86 L831.93,297.64 L833.43,297.46 L834.94,297.33 L836.44,297.23 L837.94,297.17 L839.44,297.15 L840.94,297.15 L842.44,297.14 L843.95,297.12 L845.45,297.04 L846.95,296.91 L848.45,296.68 L849.95,296.34 L851.45,295.87 L852.96,295.24 L854.46,294.44 L855.96,293.45 L857.46,292.29 L858.96,290.96 L860.46,289.48 L861.97,287.86 L863.47,286.10 L864.97,284.22 L866.47,282.23 L867.97,280.14 L869.47,277.95 L870.98,275.63 L872.48,273.19 L873.98,270.59 L875.48,267.83 L876.98,264.90 L878.48,261.77 L879.99,258.44 L881.49,254.90 L882.99,251.22 L884.49,247.42 L885.99,243.57 L887.49,239.70 L889.00,235.86 L890.50,232.11 L892.00,228.46 L893.50,224.90 L895.00,221.41 L896.50,217.97 L898.01,214.56 L899.51,211.16 L901.01,207.76 L902.51,204.33 L904.01,200.87 L905.51,197.40 L907.02,193.97 L908.52,190.60 L910.02,187.35 L911.52,184.25 L913.02,181.33 L914.52,178.64 L916.03,176.21 L917.53,174.03 L919.03,172.10 L920.53,170.39 L922.03,168.89 L923.53,167.59 L925.04,166.47 L926.54,165.52 L928.04,164.72 L929.54,164.05 L931.04,163.50 L932.54,163.07 L934.05,162.72 L935.55,162.45 L937.05,162.25 L938.55,162.11 L940.05,162.03 L941.55,161.99 L943.06,162.00 L944.56,162.04 L946.06,162.11 L947.56,162.20 L949.06,162.30 L950.56,162.41 L952.07,162.52 L953.57,162.63 L955.07,162.73 L956.57,162.80 L958.07,162.86 L959.57,162.87 L961.08,162.85 L962.58,162.79 L964.08,162.67 L965.58,162.50 L967.08,162.26 L968.58,161.97 L970.09,161.61 L971.59,161.18 L973.09,160.67 L974.59,160.09 L976.09,159.43 L977.59,158.69 L979.10,157.86 L980.60,156.94 L982.10,155.93 L983.60,154.82 L985.10,153.60 L986.61,152.29 L988.11,150.89 L989.61,149.43 L991.11,147.91 L992.61,146.35 L994.11,144.78 L995.62,143.20 L997.12,141.64 L998.62,140.10 L1000.12,138.59 L1001.62,137.09 L1003.12,135.63 L1004.63,134.19 L1006.13,132.79 L1007.63,131.41 L1009.13,130.07 L1010.63,128.76 L1012.13,127.49 L1013.64,126.25 L1015.14,125.05 L1016.64,123.89 L1018.14,122.77 L1019.64,121.70 L1021.14,120.66 L1022.65,119.67 L1024.15,118.72 L1025.65,117.80 L1027.15,116.89 L1028.65,116.01 L1030.15,115.14 L1031.66,114.27 L1033.16,113.39 L1034.66,112.51 L1036.16,111.61 L1037.66,110.69 L1039.16,109.75 L1040.67,108.76 L1042.17,107.75 L1043.67,106.70 L1045.17,105.63 L1046.67,104.53 L1048.17,103.42 L1049.68,102.28 L1051.18,101.13 L1052.68,99.98 L1054.18,98.81 L1055.68,97.64 L1057.18,96.46 L1058.69,95.29 L1060.19,94.12 L1061.69,92.96 L1063.19,91.81 L1064.69,90.68 L1066.19,89.56 L1067.70,88.47 L1069.20,87.39 L1070.70,86.35 L1072.20,85.33 L1073.70,84.35 L1075.20,83.40 L1076.71,82.50 L1078.21,81.63 L1079.71,80.81 L1081.21,80.03 L1082.71,79.28 L1084.21,78.58 L1085.72,77.91 L1087.22,77.27 L1088.72,76.67 L1090.22,76.09 L1091.72,75.55 L1093.22,75.04 L1094.73,74.55 L1096.23,74.09 L1097.73,73.65 L1099.23,73.24 L1100.73,72.84 L1102.23,72.47 L1103.74,72.11 L1105.24,71.77 L1106.74,71.44 L1108.24,71.13 L1109.74,70.83 L1111.24,70.54 L1112.75,70.26 L1114.25,69.98 L1115.75,69.70 L1117.25,69.41 L1118.75,69.10 L1120.25,68.77 L1121.76,68.41 L1123.26,68.01 L1124.76,67.58 L1126.26,67.09 L1127.76,66.56 L1129.26,66.01 L1130.77,65.43 L1132.27,64.86 L1133.77,64.31 L1135.27,63.79 L1136.77,63.31 L1138.27,62.90 L1139.78,62.57 L1141.28,62.32 L1142.78,62.19 L1144.28,62.18 L1145.78,62.31 L1147.28,62.56 L1148.79,62.92 L1150.29,63.38 L1151.79,63.93 L1153.29,64.55 L1154.79,65.24 L1156.29,65.98 L1157.80,66.76 L1159.30,67.57 L1160.80,68.39 L1162.30,69.22 L1163.80,70.04 L1165.30,70.84 L1166.81,71.61 L1168.31,72.34 L1169.81,73.00 L1171.31,73.60 L1172.81,74.12 L1174.31,74.55 L1175.82,74.88 L1177.32,75.12 L1178.82,75.27 L1180.32,75.33 L1181.82,75.31 L1183.32,75.21 L1184.83,75.04 L1186.33,74.79 L1187.83,74.48 L1189.33,74.11 L1190.83,73.67 L1192.33,73.19 L1193.84,72.65 L1195.34,72.07 L1196.84,71.45 L1198.34,70.82 L1199.84,70.17 L1201.34,69.51 L1202.85,68.86 L1204.35,68.23 L1205.85,67.62 L1207.35,67.05 L1208.85,66.52 L1210.35,66.04 L1211.86,65.63 L1213.36,65.30 L1214.86,65.04 L1216.36,64.88 L1217.86,64.82 L1219.36,64.87 L1220.87,65.02 L1222.37,65.27 L1223.87,65.59 L1225.37,65.99 L1226.87,66.43 L1228.37,66.92 L1229.88,67.43 L1231.38,67.96 L1232.88,68.50 L1234.38,69.02 L1235.88,69.53 L1237.38,70.00 L1238.89,70.42 L1240.39,70.78 L1241.89,71.07 L1243.39,71.28 L1244.89,71.38 L1246.39,71.38 L1247.90,71.26 L1249.40,71.00 L1250.90,70.59" fill="none" stroke="#3f7a86" stroke-width="1.3" stroke-dasharray="5.5,3.2,1.6,3.2"/>
<path d="M713.30,382.88 L714.80,382.81 L716.30,383.02 L717.81,383.49 L719.31,384.20 L720.81,385.12 L722.31,386.23 L723.81,387.53 L725.31,388.97 L726.82,390.55 L728.32,392.25 L729.82,394.03 L731.32,395.89 L732.82,397.80 L734.32,399.74 L735.83,401.69 L737.33,403.63 L738.83,405.52 L740.33,407.33 L741.83,409.03 L743.33,410.57 L744.84,411.94 L746.34,413.08 L747.84,413.98 L749.34,414.58 L750.84,414.86 L752.34,414.82 L753.85,414.46 L755.35,413.82 L756.85,412.90 L758.35,411.73 L759.85,410.32 L761.35,408.70 L762.86,406.88 L764.36,404.88 L765.86,402.72 L767.36,400.41 L768.86,397.99 L770.36,395.45 L771.87,392.84 L773.37,390.15 L774.87,387.42 L776.37,384.65 L777.87,381.87 L779.37,379.09 L780.88,376.30 L782.38,373.52 L783.88,370.75 L785.38,367.98 L786.88,365.23 L788.38,362.49 L789.89,359.77 L791.39,357.07 L792.89,354.39 L794.39,351.74 L795.89,349.12 L797.39,346.54 L798.90,343.99 L800.40,341.47 L801.90,339.01 L803.40,336.58 L804.90,334.21 L806.40,331.89 L807.91,329.62 L809.41,327.41 L810.91,325.26 L812.41,323.17 L813.91,321.16 L815.41,319.21 L816.92,317.33 L818.42,315.53 L819.92,313.81 L821.42,312.17 L822.92,310.62 L824.42,309.16 L825.93,307.78 L827.43,306.51 L828.93,305.33 L830.43,304.25 L831.93,303.28 L833.43,302.42 L834.94,301.68 L836.44,301.06 L837.94,300.56 L839.44,300.18 L840.94,299.94 L842.44,299.83 L843.95,299.84 L845.45,299.94 L846.95,300.11 L848.45,300.33 L849.95,300.57 L851.45,300.82 L852.96,301.05 L854.46,301.25 L855.96,301.38 L857.46,301.43 L858.96,301.39 L860.46,301.27 L861.97,301.04 L863.47,300.73 L864.97,300.31 L866.47,299.81 L867.97,299.20 L869.47,298.49 L870.98,297.69 L872.48,296.78 L873.98,295.77 L875.48,294.65 L876.98,293.43 L878.48,292.10 L879.99,290.66 L881.49,289.11 L882.99,287.45 L884.49,285.68 L885.99,283.79 L887.49,281.79 L889.00,279.67 L890.50,277.43 L892.00,275.08 L893.50,272.60 L895.00,270.00 L896.50,267.28 L898.01,264.44 L899.51,261.46 L901.01,258.37 L902.51,255.16 L904.01,251.86 L905.51,248.51 L907.02,245.11 L908.52,241.71 L910.02,238.32 L911.52,234.97 L913.02,231.68 L914.52,228.46 L916.03,225.34 L917.53,222.29 L919.03,219.33 L920.53,216.47 L922.03,213.69 L923.53,211.01 L925.04,208.43 L926.54,205.94 L928.04,203.56 L929.54,201.28 L931.04,199.11 L932.54,197.05 L934.05,195.12 L935.55,193.32 L937.05,191.66 L938.55,190.16 L940.05,188.83 L941.55,187.67 L943.06,186.69 L944.56,185.89 L946.06,185.27 L947.56,184.79 L949.06,184.46 L950.56,184.25 L952.07,184.16 L953.57,184.15 L955.07,184.23 L956.57,184.37 L958.07,184.56 L959.57,184.78 L961.08,185.03 L962.58,185.29 L964.08,185.57 L965.58,185.85 L967.08,186.14 L968.58,186.43 L970.09,186.72 L971.59,187.00 L973.09,187.28 L974.59,187.55 L976.09,187.80 L977.59,188.04 L979.10,188.25 L980.60,188.44 L982.10,188.61 L983.60,188.75 L985.10,188.85 L986.61,188.92 L988.11,188.95 L989.61,188.94 L991.11,188.88 L992.61,188.77 L994.11,188.60 L995.62,188.36 L997.12,188.04 L998.62,187.64 L1000.12,187.15 L1001.62,186.55 L1003.12,185.85 L1004.63,185.03 L1006.13,184.08 L1007.63,182.99 L1009.13,181.77 L1010.63,180.39 L1012.13,178.86 L1013.64,177.17 L1015.14,175.36 L1016.64,173.44 L1018.14,171.44 L1019.64,169.37 L1021.14,167.26 L1022.65,165.13 L1024.15,162.98 L1025.65,160.83 L1027.15,158.69 L1028.65,156.58 L1030.15,154.49 L1031.66,152.45 L1033.16,150.46 L1034.66,148.54 L1036.16,146.70 L1037.66,144.94 L1039.16,143.29 L1040.67,141.74 L1042.17,140.30 L1043.67,138.96 L1045.17,137.71 L1046.67,136.54 L1048.17,135.44 L1049.68,134.40 L1051.18,133.42 L1052.68,132.50 L1054.18,131.63 L1055.68,130.83 L1057.18,130.07 L1058.69,129.37 L1060.19,128.73 L1061.69,128.13 L1063.19,127.59 L1064.69,127.10 L1066.19,126.65 L1067.70,126.26 L1069.20,125.91 L1070.70,125.61 L1072.20,125.35 L1073.70,125.14 L1075.20,124.97 L1076.71,124.85 L1078.21,124.76 L1079.71,124.71 L1081.21,124.69 L1082.71,124.68 L1084.21,124.69 L1085.72,124.70 L1087.22,124.70 L1088.72,124.69 L1090.22,124.67 L1091.72,124.61 L1093.22,124.52 L1094.73,124.38 L1096.23,124.20 L1097.73,123.95 L1099.23,123.64 L1100.73,123.28 L1102.23,122.86 L1103.74,122.38 L1105.24,121.86 L1106.74,121.30 L1108.24,120.69 L1109.74,120.04 L1111.24,119.36 L1112.75,118.65 L1114.25,117.92 L1115.75,117.16 L1117.25,116.38 L1118.75,115.58 L1120.25,114.77 L1121.76,113.95 L1123.26,113.12 L1124.76,112.29 L1126.26,111.46 L1127.76,110.64 L1129.26,109.82 L1130.77,109.01 L1132.27,108.22 L1133.77,107.43 L1135.27,106.67 L1136.77,105.93 L1138.27,105.21 L1139.78,104.52 L1141.28,103.85 L1142.78,103.22 L1144.28,102.63 L1145.78,102.07 L1147.28,101.55 L1148.79,101.08 L1150.29,100.65 L1151.79,100.27 L1153.29,99.95 L1154.79,99.68 L1156.29,99.47 L1157.80,99.32 L1159.30,99.23 L1160.80,99.21 L1162.30,99.26 L1163.80,99.38 L1165.30,99.57 L1166.81,99.83 L1168.31,100.15 L1169.81,100.51 L1171.31,100.89 L1172.81,101.30 L1174.31,101.71 L1175.82,102.12 L1177.32,102.51 L1178.82,102.87 L1180.32,103.19 L1181.82,103.45 L1183.32,103.65 L1184.83,103.78 L1186.33,103.82 L1187.83,103.79 L1189.33,103.69 L1190.83,103.53 L1192.33,103.31 L1193.84,103.03 L1195.34,102.71 L1196.84,102.35 L1198.34,101.94 L1199.84,101.51 L1201.34,101.05 L1202.85,100.57 L1204.35,100.07 L1205.85,99.57 L1207.35,99.05 L1208.85,98.54 L1210.35,98.04 L1211.86,97.54 L1213.36,97.06 L1214.86,96.61 L1216.36,96.17 L1217.86,95.78 L1219.36,95.42 L1220.87,95.10 L1222.37,94.83 L1223.87,94.61 L1225.37,94.45 L1226.87,94.36 L1228.37,94.33 L1229.88,94.37 L1231.38,94.46 L1232.88,94.59 L1234.38,94.76 L1235.88,94.96 L1237.38,95.18 L1238.89,95.42 L1240.39,95.67 L1241.89,95.92 L1243.39,96.16 L1244.89,96.39 L1246.39,96.60 L1247.90,96.77 L1249.40,96.91 L1250.90,97.01" fill="none" stroke="#cc1ccc" stroke-width="1.75" stroke-linejoin="round"/>
<path d="M1092.1,73.75 h10 M1097.1,68.75 v10" stroke="#40c050" stroke-width="1.6" opacity="0.6"/>
<path d="M1092.1,124.2 h10 M1097.1,119.2 v10" stroke="#f8f080" stroke-width="1.6" opacity="0.6"/>
<rect x="0" y="520" width="1275" height="117" fill="#cdcdcd" />
<rect x="1275" y="540" width="5" height="97" fill="#c8c8c8" />
<rect x="1275" y="539.5" width="5" height="1" fill="#8a8a8a" />
<rect x="1275" y="520" width="1" height="117" fill="#a8a8a8" />
<rect x="3.5" y="524" width="631.0" height="108.5" fill="none" stroke="#f4f4f4" stroke-width="1"/>
<rect x="5.0" y="525.5" width="628.5" height="106" fill="none" stroke="#8c8c8c" stroke-width="1"/>
<rect x="643.5" y="524" width="630.5" height="108.5" fill="none" stroke="#f4f4f4" stroke-width="1"/>
<rect x="645.0" y="525.5" width="628.0" height="106" fill="none" stroke="#8c8c8c" stroke-width="1"/>
<rect x="15.2" y="530.5" width="114.10000000000001" height="24.799999999999955" fill="#ffff00" />
<path d="M15.799999999999999,555.3 V531.1 H129.3" fill="none" stroke="#303030" stroke-width="1.3"/>
<path d="M15.7,554.8 H128.8 V531.0" fill="none" stroke="#f0f0f0" stroke-width="1"/>
<text transform="matrix(0.24224,0,0,0.19014,128.229,549.500)" font-family="Liberation Sans" font-size="100" font-weight="normal" font-style="normal" fill="#000" text-anchor="end" xml:space="preserve"  stroke="#ffff00" stroke-width="1.5">116.372</text>
<rect x="150.9" y="530.5" width="114.20000000000002" height="24.799999999999955" fill="#ffff00" />
<path d="M151.5,555.3 V531.1 H265.1" fill="none" stroke="#303030" stroke-width="1.3"/>
<path d="M151.4,554.8 H264.6 V531.0" fill="none" stroke="#f0f0f0" stroke-width="1"/>
<text transform="matrix(0.24224,0,0,0.19014,264.029,549.500)" font-family="Liberation Sans" font-size="100" font-weight="normal" font-style="normal" fill="#000" text-anchor="end" xml:space="preserve"  stroke="#ffff00" stroke-width="1.5">70.4</text>
<rect x="287" y="530.5" width="114.39999999999998" height="24.799999999999955" fill="#ffff00" />
<path d="M287.6,555.3 V531.1 H401.4" fill="none" stroke="#303030" stroke-width="1.3"/>
<path d="M287.5,554.8 H400.9 V531.0" fill="none" stroke="#f0f0f0" stroke-width="1"/>
<text transform="matrix(0.24224,0,0,0.19014,400.329,549.500)" font-family="Liberation Sans" font-size="100" font-weight="normal" font-style="normal" fill="#000" text-anchor="end" xml:space="preserve"  stroke="#ffff00" stroke-width="1.5">5002</text>
<rect x="15.2" y="595.6" width="114.10000000000001" height="24.699999999999932" fill="#00ff00" />
<path d="M15.799999999999999,620.3 V596.2 H129.3" fill="none" stroke="#303030" stroke-width="1.3"/>
<path d="M15.7,619.8 H128.8 V596.1" fill="none" stroke="#f0f0f0" stroke-width="1"/>
<text transform="matrix(0.24224,0,0,0.19014,128.229,614.700)" font-family="Liberation Sans" font-size="100" font-weight="normal" font-style="normal" fill="#000" text-anchor="end" xml:space="preserve"  stroke="#00ff00" stroke-width="1.5">124.699</text>
<rect x="150.9" y="595.6" width="114.20000000000002" height="24.699999999999932" fill="#00ff00" />
<path d="M151.5,620.3 V596.2 H265.1" fill="none" stroke="#303030" stroke-width="1.3"/>
<path d="M151.4,619.8 H264.6 V596.1" fill="none" stroke="#f0f0f0" stroke-width="1"/>
<text transform="matrix(0.24224,0,0,0.19014,264.029,614.700)" font-family="Liberation Sans" font-size="100" font-weight="normal" font-style="normal" fill="#000" text-anchor="end" xml:space="preserve"  stroke="#00ff00" stroke-width="1.5">70.4</text>
<rect x="287" y="595.6" width="114.39999999999998" height="24.699999999999932" fill="#00ff00" />
<path d="M287.6,620.3 V596.2 H401.4" fill="none" stroke="#303030" stroke-width="1.3"/>
<path d="M287.5,619.8 H400.9 V596.1" fill="none" stroke="#f0f0f0" stroke-width="1"/>
<text transform="matrix(0.24224,0,0,0.19014,400.329,614.700)" font-family="Liberation Sans" font-size="100" font-weight="normal" font-style="normal" fill="#000" text-anchor="end" xml:space="preserve"  stroke="#00ff00" stroke-width="1.5">5002</text>
<rect x="505.6" y="530.7" width="114.89999999999998" height="24.649999999999977" fill="#0000f5" />
<path d="M506.20000000000005,555.35 V531.3000000000001 H620.5" fill="none" stroke="#000070" stroke-width="1.3"/>
<path d="M506.1,554.85 H620.0 V531.2" fill="none" stroke="#ffffff" stroke-width="1"/>
<text transform="matrix(0.24224,0,0,0.19014,618.029,549.700)" font-family="Liberation Sans" font-size="100" font-weight="normal" font-style="normal" fill="#ffffff" text-anchor="end" xml:space="preserve" >5.3900</text>
<rect x="505.6" y="562.7" width="114.89999999999998" height="24.59999999999991" fill="#0000f5" />
<path d="M506.20000000000005,587.3 V563.3000000000001 H620.5" fill="none" stroke="#000070" stroke-width="1.3"/>
<path d="M506.1,586.8 H620.0 V563.2" fill="none" stroke="#ffffff" stroke-width="1"/>
<text transform="matrix(0.24224,0,0,0.19014,618.029,581.700)" font-family="Liberation Sans" font-size="100" font-weight="normal" font-style="normal" fill="#ffffff" text-anchor="end" xml:space="preserve" >1.00</text>
<rect x="505.6" y="595.9" width="114.89999999999998" height="24.600000000000023" fill="#0000f5" />
<path d="M506.20000000000005,620.5 V596.5 H620.5" fill="none" stroke="#000070" stroke-width="1.3"/>
<path d="M506.1,620.0 H620.0 V596.4" fill="none" stroke="#ffffff" stroke-width="1"/>
<text transform="matrix(0.24224,0,0,0.19014,618.029,614.800)" font-family="Liberation Sans" font-size="100" font-weight="normal" font-style="normal" fill="#ffffff" text-anchor="end" xml:space="preserve" >8.327</text>
<text transform="matrix(0.25000,0,0,0.18378,47.250,584.416)" font-family="Liberation Sans" font-size="100" font-weight="normal" font-style="normal" fill="#000" xml:space="preserve"  stroke="#cdcdcd" stroke-width="1.5">lbft</text>
<text transform="matrix(0.24144,0,0,0.17447,179.910,584.736)" font-family="Liberation Sans" font-size="100" font-weight="normal" font-style="normal" fill="#000" xml:space="preserve"  stroke="#cdcdcd" stroke-width="1.5">mph</text>
<text transform="matrix(0.24780,0,0,0.18400,313.265,584.536)" font-family="Liberation Sans" font-size="100" font-weight="normal" font-style="normal" fill="#000" xml:space="preserve"  stroke="#cdcdcd" stroke-width="1.5">rpm</text>
<text transform="matrix(0.24645,0,0,0.17162,433.075,551.428)" font-family="Liberation Sans" font-size="100" font-weight="normal" font-style="normal" fill="#1414b4" xml:space="preserve" >ratio</text>
<text transform="matrix(0.23429,0,0,0.18784,434.566,583.012)" font-family="Liberation Sans" font-size="100" font-weight="normal" font-style="normal" fill="#1414b4" xml:space="preserve" >tcf</text>
<text transform="matrix(0.23568,0,0,0.19459,434.157,616.305)" font-family="Liberation Sans" font-size="100" font-weight="normal" font-style="normal" fill="#1414b4" xml:space="preserve" >delta</text>
<rect x="655.2" y="530.5" width="114.09999999999991" height="24.799999999999955" fill="#ffff00" />
<path d="M655.8000000000001,555.3 V531.1 H769.3" fill="none" stroke="#303030" stroke-width="1.3"/>
<path d="M655.7,554.8 H768.8 V531.0" fill="none" stroke="#f0f0f0" stroke-width="1"/>
<text transform="matrix(0.24224,0,0,0.19014,768.229,549.500)" font-family="Liberation Sans" font-size="100" font-weight="normal" font-style="normal" fill="#000" text-anchor="end" xml:space="preserve"  stroke="#ffff00" stroke-width="1.5">118.146</text>
<rect x="790.9" y="530.5" width="114.20000000000005" height="24.799999999999955" fill="#ffff00" />
<path d="M791.5,555.3 V531.1 H905.1" fill="none" stroke="#303030" stroke-width="1.3"/>
<path d="M791.4,554.8 H904.6 V531.0" fill="none" stroke="#f0f0f0" stroke-width="1"/>
<text transform="matrix(0.24224,0,0,0.19014,904.029,549.500)" font-family="Liberation Sans" font-size="100" font-weight="normal" font-style="normal" fill="#000" text-anchor="end" xml:space="preserve"  stroke="#ffff00" stroke-width="1.5">77.4</text>
<rect x="927" y="530.5" width="114.40000000000009" height="24.799999999999955" fill="#ffff00" />
<path d="M927.6,555.3 V531.1 H1041.4" fill="none" stroke="#303030" stroke-width="1.3"/>
<path d="M927.5,554.8 H1040.9 V531.0" fill="none" stroke="#f0f0f0" stroke-width="1"/>
<text transform="matrix(0.24224,0,0,0.19014,1040.329,549.500)" font-family="Liberation Sans" font-size="100" font-weight="normal" font-style="normal" fill="#000" text-anchor="end" xml:space="preserve"  stroke="#ffff00" stroke-width="1.5">5502</text>
<rect x="655.2" y="595.6" width="114.09999999999991" height="24.699999999999932" fill="#00ff00" />
<path d="M655.8000000000001,620.3 V596.2 H769.3" fill="none" stroke="#303030" stroke-width="1.3"/>
<path d="M655.7,619.8 H768.8 V596.1" fill="none" stroke="#f0f0f0" stroke-width="1"/>
<text transform="matrix(0.24224,0,0,0.19014,768.229,614.700)" font-family="Liberation Sans" font-size="100" font-weight="normal" font-style="normal" fill="#000" text-anchor="end" xml:space="preserve"  stroke="#00ff00" stroke-width="1.5">126.599</text>
<rect x="790.9" y="595.6" width="114.20000000000005" height="24.699999999999932" fill="#00ff00" />
<path d="M791.5,620.3 V596.2 H905.1" fill="none" stroke="#303030" stroke-width="1.3"/>
<path d="M791.4,619.8 H904.6 V596.1" fill="none" stroke="#f0f0f0" stroke-width="1"/>
<text transform="matrix(0.24224,0,0,0.19014,904.029,614.700)" font-family="Liberation Sans" font-size="100" font-weight="normal" font-style="normal" fill="#000" text-anchor="end" xml:space="preserve"  stroke="#00ff00" stroke-width="1.5">77.4</text>
<rect x="927" y="595.6" width="114.40000000000009" height="24.699999999999932" fill="#00ff00" />
<path d="M927.6,620.3 V596.2 H1041.4" fill="none" stroke="#303030" stroke-width="1.3"/>
<path d="M927.5,619.8 H1040.9 V596.1" fill="none" stroke="#f0f0f0" stroke-width="1"/>
<text transform="matrix(0.24224,0,0,0.19014,1040.329,614.700)" font-family="Liberation Sans" font-size="100" font-weight="normal" font-style="normal" fill="#000" text-anchor="end" xml:space="preserve"  stroke="#00ff00" stroke-width="1.5">5502</text>
<rect x="1145.6" y="530.7" width="114.90000000000009" height="24.649999999999977" fill="#0000f5" />
<path d="M1146.1999999999998,555.35 V531.3000000000001 H1260.5" fill="none" stroke="#000070" stroke-width="1.3"/>
<path d="M1146.1,554.85 H1260.0 V531.2" fill="none" stroke="#ffffff" stroke-width="1"/>
<text transform="matrix(0.24224,0,0,0.19014,1258.029,549.700)" font-family="Liberation Sans" font-size="100" font-weight="normal" font-style="normal" fill="#ffffff" text-anchor="end" xml:space="preserve" >5.3900</text>
<rect x="1145.6" y="562.7" width="114.90000000000009" height="24.59999999999991" fill="#0000f5" />
<path d="M1146.1999999999998,587.3 V563.3000000000001 H1260.5" fill="none" stroke="#000070" stroke-width="1.3"/>
<path d="M1146.1,586.8 H1260.0 V563.2" fill="none" stroke="#ffffff" stroke-width="1"/>
<text transform="matrix(0.24224,0,0,0.19014,1258.029,581.700)" font-family="Liberation Sans" font-size="100" font-weight="normal" font-style="normal" fill="#ffffff" text-anchor="end" xml:space="preserve" >1.00</text>
<rect x="1145.6" y="595.9" width="114.90000000000009" height="24.600000000000023" fill="#0000f5" />
<path d="M1146.1999999999998,620.5 V596.5 H1260.5" fill="none" stroke="#000070" stroke-width="1.3"/>
<path d="M1146.1,620.0 H1260.0 V596.4" fill="none" stroke="#ffffff" stroke-width="1"/>
<text transform="matrix(0.24224,0,0,0.19014,1258.029,614.800)" font-family="Liberation Sans" font-size="100" font-weight="normal" font-style="normal" fill="#ffffff" text-anchor="end" xml:space="preserve" >8.453</text>
<text transform="matrix(0.24483,0,0,0.18000,688.241,583.620)" font-family="Liberation Sans" font-size="100" font-weight="normal" font-style="normal" fill="#000" xml:space="preserve"  stroke="#cdcdcd" stroke-width="1.5">Hp</text>
<text transform="matrix(0.24171,0,0,0.17447,823.308,584.736)" font-family="Liberation Sans" font-size="100" font-weight="normal" font-style="normal" fill="#000" xml:space="preserve"  stroke="#cdcdcd" stroke-width="1.5">mph</text>
<text transform="matrix(0.24780,0,0,0.18400,953.265,584.536)" font-family="Liberation Sans" font-size="100" font-weight="normal" font-style="normal" fill="#000" xml:space="preserve"  stroke="#cdcdcd" stroke-width="1.5">rpm</text>
<text transform="matrix(0.24645,0,0,0.17162,1073.075,551.428)" font-family="Liberation Sans" font-size="100" font-weight="normal" font-style="normal" fill="#1414b4" xml:space="preserve" >ratio</text>
<text transform="matrix(0.23429,0,0,0.18784,1074.566,583.012)" font-family="Liberation Sans" font-size="100" font-weight="normal" font-style="normal" fill="#1414b4" xml:space="preserve" >tcf</text>
<text transform="matrix(0.23568,0,0,0.19459,1074.157,616.305)" font-family="Liberation Sans" font-size="100" font-weight="normal" font-style="normal" fill="#1414b4" xml:space="preserve" >delta</text>
<rect x="0" y="637" width="1280" height="1" fill="#606060" />
<rect x="0" y="638" width="1280" height="62" fill="#ffffff" />
<rect x="0" y="700" width="1280" height="2" fill="#5a5a5a" />
<text transform="matrix(0.16599,0,0,0.09324,508.638,654.107)" font-family="Liberation Sans" font-size="100" font-weight="bold" font-style="normal" fill="#101010" xml:space="preserve" >Folder</text>
<text transform="matrix(0.16720,0,0,0.10143,509.730,672.899)" font-family="Liberation Sans" font-size="100" font-weight="bold" font-style="normal" fill="#101010" xml:space="preserve" >Run ID</text>
<text transform="matrix(0.16481,0,0,0.10143,526.146,692.599)" font-family="Liberation Sans" font-size="100" font-weight="bold" font-style="normal" fill="#101010" xml:space="preserve" >Date</text>
<rect x="569" y="642.9" width="199" height="13.100000000000023" fill="#ffffff" />
<path d="M569.5,656 V643.4 H768" fill="none" stroke="#404040" stroke-width="1.2"/>
<path d="M569.5,655.5 H767.5 V643.4" fill="none" stroke="#d8d8d8" stroke-width="1"/>
<rect x="569" y="662.6" width="199" height="13.100000000000023" fill="#ffffff" />
<path d="M569.5,675.7 V663.1 H768" fill="none" stroke="#404040" stroke-width="1.2"/>
<path d="M569.5,675.2 H767.5 V663.1" fill="none" stroke="#d8d8d8" stroke-width="1"/>
<rect x="569" y="681.75" width="199" height="13.149999999999977" fill="#ffffff" />
<path d="M569.5,694.9 V682.25 H768" fill="none" stroke="#404040" stroke-width="1.2"/>
<path d="M569.5,694.4 H767.5 V682.25" fill="none" stroke="#d8d8d8" stroke-width="1"/>
<text transform="matrix(0.18021,0,0,0.09640,570.339,653.400)" font-family="Liberation Sans" font-size="100" font-weight="normal" font-style="normal" fill="#101010" xml:space="preserve"  stroke="#ffffff" stroke-width="1.5">hps_15impreza</text>
<text transform="matrix(0.18180,0,0,0.09928,570.327,672.800)" font-family="Liberation Sans" font-size="100" font-weight="normal" font-style="normal" fill="#101010" xml:space="preserve"  stroke="#ffffff" stroke-width="1.5">ru4450_venturi</text>
<text transform="matrix(0.18096,0,0,0.10072,570.695,692.100)" font-family="Liberation Sans" font-size="100" font-weight="normal" font-style="normal" fill="#101010" xml:space="preserve"  stroke="#ffffff" stroke-width="1.5">2015-03-25 11:25:03</text>
<path d="M106.1,649.4 L125.5,649.4 L120.5,660.6 L135.5,660.6 L140.5,649.4 L159.25,649.4 L145.2,680.6 L126.1,680.6 L132.7,666.6 L117.7,666.6 L111.1,680.6 L92.1,680.6 Z" fill="#0c0c0c" stroke="#0c0c0c" stroke-width="0.4"/>
<path d="M161.5,649.4 L207.5,649.4 Q213.5,649.4 212.8,655.6 Q211.5,666.25 201.25,666.25 L176.9,666.25 L166.9,680.6 L148.1,680.6 Z M180,655.3 L192.5,655.3 Q195.5,655.3 195,658 Q194.5,660.6 191,660.6 L177.5,660.6 Z" fill="#0c0c0c" fill-rule="evenodd" stroke="#0c0c0c" stroke-width="0.4"/>
<path d="M228.9,649.6 L276.3,649.6 L273,656.4 L244.4,656.6 L262,671 Q268,676 265.2,681 Q262,688 252,690.5 Q246,691.4 240,691.4 L87.5,691.4 L91.5,684.4 L233.3,684.4 L216,668 Q211.5,663 214,657 Q218,650 228.9,649.6 Z" fill="#e8222a" stroke="#3a0808" stroke-width="0.9" stroke-linejoin="round"/>
<text transform="matrix(0.16849,0,0,0.19014,282.863,665.510)" font-family="Liberation Sans" font-size="100" font-weight="bold" font-style="italic" fill="#111" xml:space="preserve" stroke="#111" stroke-width="26" stroke-linejoin="round">PERFORMANCE</text>
<text transform="matrix(0.17133,0,0,0.18592,282.857,689.114)" font-family="Liberation Sans" font-size="100" font-weight="bold" font-style="italic" fill="#111" xml:space="preserve" stroke="#111" stroke-width="26" stroke-linejoin="round">PRODUCTS</text>
<text transform="matrix(0.16849,0,0,0.19014,282.863,665.510)" font-family="Liberation Sans" font-size="100" font-weight="bold" font-style="italic" fill="#ffffff" xml:space="preserve" stroke="#ffffff" stroke-width="5" stroke-linejoin="round">PERFORMANCE</text>
<text transform="matrix(0.17133,0,0,0.18592,282.857,689.114)" font-family="Liberation Sans" font-size="100" font-weight="bold" font-style="italic" fill="#ffffff" xml:space="preserve" stroke="#ffffff" stroke-width="5" stroke-linejoin="round">PRODUCTS</text>
<ellipse cx="1043" cy="669.5" rx="114" ry="20" transform="rotate(-7.3 1043 669.5)" fill="none" stroke="#c4c4c4" stroke-width="1.5"/>
<text transform="matrix(0.61917,0,0,0.19556,881.362,670.893)" font-family="Liberation Sans" font-size="100" font-weight="bold" font-style="italic" fill="#e3242b" xml:space="preserve" stroke="#e3242b" stroke-width="10" stroke-linejoin="round">Dyna</text>
<text transform="matrix(0.62179,0,0,0.22660,1028.144,673.941)" font-family="Liberation Sans" font-size="100" font-weight="bold" font-style="italic" fill="#2b3f98" xml:space="preserve" stroke="#2b3f98" stroke-width="10" stroke-linejoin="round">pack</text>
<text transform="matrix(0.10165,0,0,0.07042,955.492,681.930)" font-family="Liberation Sans" font-size="100" font-weight="bold" font-style="italic" fill="#b4b4b4" xml:space="preserve" >C H A S S I S</text>
<text transform="matrix(0.10404,0,0,0.07042,1046.792,681.930)" font-family="Liberation Sans" font-size="100" font-weight="bold" font-style="italic" fill="#b4b4b4" xml:space="preserve" >D Y N A M O M E T E R S</text>
</svg>
</body></html>
